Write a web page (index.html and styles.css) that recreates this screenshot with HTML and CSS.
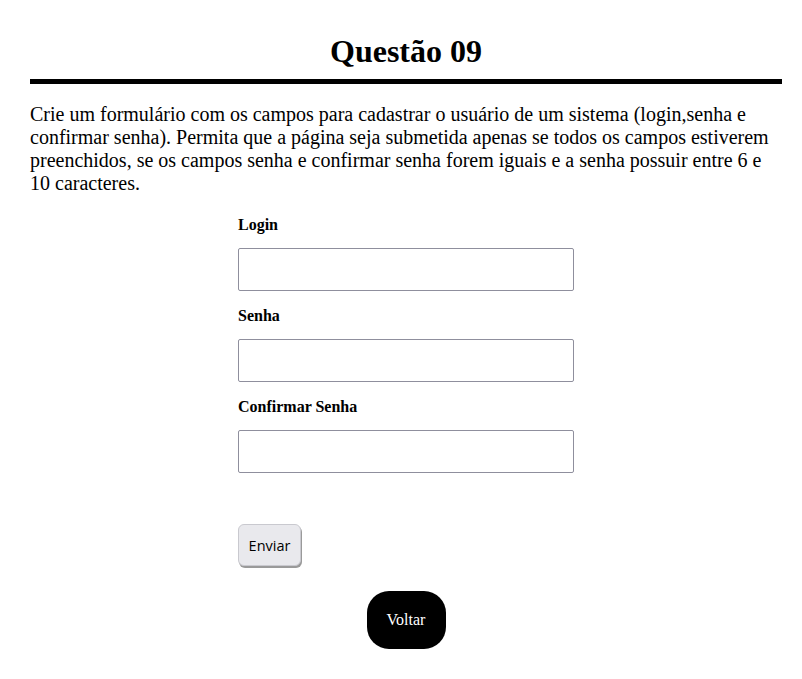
FILE: index.html
```html
<!DOCTYPE html>
<html lang="pt-BR">
<head>
<meta charset="utf-8">
<title>Questão 09</title>
<link rel="stylesheet" href="styles.css">
</head>
<body>
<main class="page">
  <h1 class="title">Questão 09</h1>
  <div class="rule"></div>
  <p class="statement">Crie um formulário com os campos para cadastrar o usuário de um sistema (login,senha e confirmar senha). Permita que a página seja submetida apenas se todos os campos estiverem preenchidos, se os campos senha e confirmar senha forem iguais e a senha possuir entre 6 e 10 caracteres.</p>
  <form class="form">
    <label class="label" for="login">Login</label>
    <input class="field" id="login" type="text">
    <label class="label" for="senha">Senha</label>
    <input class="field" id="senha" type="password">
    <label class="label" for="conf">Confirmar Senha</label>
    <input class="field" id="conf" type="password">
    <button class="submit" type="button">Enviar</button>
  </form>
  <div class="back-wrap">
    <button class="back" type="button">Voltar</button>
  </div>
</main>
</body>
</html>
```
FILE: styles.css
```css
html, body {
  margin: 0;
  padding: 0;
  background: #fff;
}
body {
  font-family: "Liberation Serif", "Times New Roman", serif;
  color: #000;
}
.page {
  width: 752px;
  margin-left: 30px;
  display: flex;
  flex-direction: column;
}
.title {
  margin: 33px 0 0;
  text-align: center;
  font-size: 32px;
  font-weight: bold;
  line-height: 37px;
}
.rule {
  height: 5px;
  background: #000;
  margin-top: 9px;
}
.statement {
  margin: 19px 0 0;
  font-size: 20px;
  line-height: 23px;
}
.form {
  display: flex;
  flex-direction: column;
  align-items: flex-start;
  margin-left: 208px;
  margin-top: 21px;
}
.label {
  font-weight: bold;
  font-size: 16px;
  line-height: 18px;
  margin-bottom: 14px;
}
.field {
  box-sizing: border-box;
  width: 336px;
  height: 43px;
  border: 1px solid #8f8f9d;
  border-radius: 2px;
  margin: 0 0 16px;
  padding: 0;
  background: #fff;
}
.submit {
  margin-top: 35px;
  box-sizing: border-box;
  width: 63px;
  height: 42px;
  background: #e9e9ed;
  border: 1px solid #c9c9cf;
  border-radius: 6px;
  box-shadow: 1px 2px 0 #9a9a9a;
  font-family: "Open Sans", "Liberation Sans", sans-serif;
  font-size: 14.5px;
  color: #000;
  padding: 0;
}
.back-wrap {
  display: flex;
  justify-content: center;
  margin-top: 25px;
}
.back {
  width: 79px;
  height: 58px;
  background: #000;
  color: #fff;
  border: none;
  border-radius: 22px;
  font-family: "Liberation Serif", "Times New Roman", serif;
  font-size: 16px;
  padding: 0;
}
```
